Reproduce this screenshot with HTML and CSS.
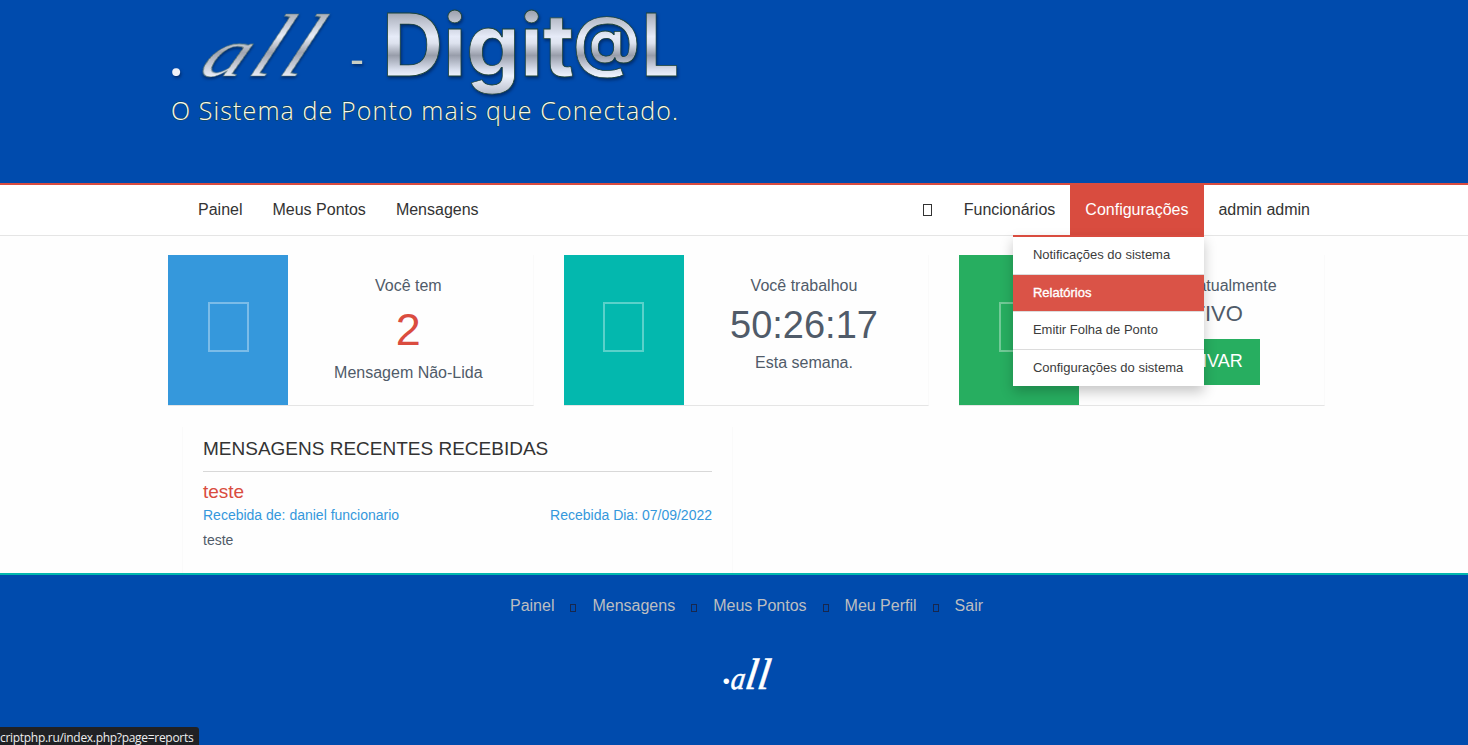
FILE: index.html
```html
<!DOCTYPE html>
<html lang="pt-BR">
<head>
<meta charset="utf-8">
<title>.all - Digit@L</title>
<link rel="stylesheet" href="styles.css">
</head>
<body>
<header class="header">
  <svg class="logo" width="520" height="135" viewBox="0 0 520 135" role="img">
    <defs>
      <linearGradient id="metal" gradientUnits="userSpaceOnUse" x1="0" y1="12" x2="0" y2="94">
        <stop offset="0" stop-color="#a0a5b1"/>
        <stop offset=".1" stop-color="#bbc0cc"/>
        <stop offset=".3" stop-color="#e6ebf8"/>
        <stop offset=".38" stop-color="#dde2ee"/>
        <stop offset=".53" stop-color="#989daa"/>
        <stop offset=".7" stop-color="#d8deec"/>
        <stop offset=".78" stop-color="#eef2fc"/>
        <stop offset="1" stop-color="#b9bfcc"/>
      </linearGradient>
      <linearGradient id="metal-script" gradientUnits="userSpaceOnUse" x1="0" y1="-62" x2="0" y2="2">
        <stop offset="0" stop-color="#aab0bb"/>
        <stop offset=".35" stop-color="#e8edf8"/>
        <stop offset=".6" stop-color="#a0a5b1"/>
        <stop offset="1" stop-color="#eef2fc"/>
      </linearGradient>
    </defs>
    <text class="logo-dot" x="2" y="76">.</text>
    <text class="logo-script" transform="translate(29 76) skewX(-26)"><tspan class="logo-a" textLength="44" lengthAdjust="spacingAndGlyphs">a</tspan><tspan dx="5">l</tspan><tspan dx="6">l</tspan></text>
    <text class="logo-dash" x="182" y="74">-</text>
    <text class="logo-name" x="214" y="76"><tspan textLength="192" lengthAdjust="spacingAndGlyphs">Digit</tspan><tspan class="logo-at" x="405" y="64" textLength="67" lengthAdjust="spacingAndGlyphs">@</tspan><tspan x="474" y="76" textLength="37" lengthAdjust="spacingAndGlyphs">L</tspan></text>
    <text class="logo-tag" x="3" y="120" textLength="507">O Sistema de Ponto mais que Conectado.</text>
  </svg>
</header>
<nav class="nav">
  <div class="nav-side">
    <a class="nav-link">Painel</a><a class="nav-link">Meus Pontos</a><a class="nav-link">Mensagens</a>
  </div>
  <div class="nav-side">
    <a class="nav-link"><i class="box box-nav"></i></a><a class="nav-link">Funcionários</a>
    <div class="nav-drop">
      <a class="nav-link nav-active">Configurações</a>
      <div class="menu">
        <a class="menu-item">Notificações do sistema</a>
        <a class="menu-item menu-hover">Relatórios</a>
        <a class="menu-item">Emitir Folha de Ponto</a>
        <a class="menu-item">Configurações do sistema</a>
      </div>
    </div>
    <a class="nav-link nav-user">admin admin</a>
  </div>
</nav>
<main class="main">
  <section class="cards">
    <div class="card">
      <div class="card-icon blue"><i class="box box-card"></i></div>
      <div class="card-body"><p>Você tem</p><p class="count">2</p><p>Mensagem Não-Lida</p></div>
    </div>
    <div class="card">
      <div class="card-icon teal"><i class="box box-card"></i></div>
      <div class="card-body"><p>Você trabalhou</p><p class="hours">50:26:17</p><p>Esta semana.</p></div>
    </div>
    <div class="card">
      <div class="card-icon green"><i class="box box-card"></i></div>
      <div class="card-body"><p>Você está atualmente</p><p class="state">INATIVO</p><a class="button">ATIVAR</a></div>
    </div>
  </section>
  <section class="panel">
    <h4 class="panel-title">MENSAGENS RECENTES RECEBIDAS</h4>
    <p class="subject">teste</p>
    <div class="meta"><span>Recebida de: daniel funcionario</span><span>Recebida Dia: 07/09/2022</span></div>
    <p class="message">teste</p>
  </section>
</main>
<footer class="footer">
  <div class="foot-links">
    <a>Painel</a><i class="box box-foot"></i><a>Mensagens</a><i class="box box-foot"></i><a>Meus Pontos</a><i class="box box-foot"></i><a>Meu Perfil</a><i class="box box-foot"></i><a>Sair</a>
  </div>
  <svg class="foot-logo" width="50" height="40" viewBox="0 0 50 40" role="img">
    <text class="foot-dot" x="0" y="26">.</text>
    <text class="foot-script" transform="translate(8 31) skewX(-8)"><tspan class="foot-a" textLength="14" lengthAdjust="spacingAndGlyphs">a</tspan><tspan>l</tspan><tspan>l</tspan></text>
  </svg>
</footer>
<div class="status">criptphp.ru/index.php?page=reports</div>
</body>
</html>
```
FILE: styles.css
```css
* { box-sizing: border-box; }
body {
  margin: 0;
  height: 745px;
  overflow: hidden;
  display: flex;
  flex-direction: column;
  background: #fefefe;
  color: #505b69;
  font: 16px/24px "Liberation Sans", Arial, sans-serif;
}
p, h4 { margin: 0; font-weight: 400; }
.header { height: 183px; padding-left: 168px; background: #004bad; flex: none; }
.logo { display: block; overflow: visible; }
.logo text { fill: url(#metal); filter: drop-shadow(1px 2px 1.5px rgba(0, 20, 60, .55)); }
.logo .logo-dot { font: 700 52px Lato, sans-serif; fill: #eef1f8; }
.logo .logo-script { font: italic 89px "Liberation Serif", serif; fill: url(#metal-script); stroke: #5d786c; stroke-width: .6px; }
.logo .logo-a { font-size: 68px; }
.logo .logo-dash { font: 400 42px "Liberation Sans", sans-serif; fill: #c9cfc4; }
.logo .logo-name { font: 700 86px Inter, sans-serif; stroke: #1d4438; stroke-width: .8px; }
.logo .logo-at { font-size: 66px; }
.logo .logo-tag {
  font: 300 25px "Open Sans", sans-serif;
  fill: #f5f8f0;
  stroke: #1d4438;
  stroke-width: 1px;
  paint-order: stroke;
  filter: none;
}

.box { display: block; border: 1px solid currentColor; }
.nav {
  height: 53px;
  flex: none;
  display: flex;
  justify-content: space-between;
  padding: 0 143px 0 183px;
  border-top: 2px solid #d94c3f;
  border-bottom: 1px solid #e5e5e5;
  background: #fff;
}
.nav-side { display: flex; height: 50px; }
.nav-link { display: flex; align-items: center; height: 50px; padding: 0 15px; color: #333; }
.nav-active { height: 52px; padding: 0 15.4px 2px 15px; background: #d94c3f; color: #fff; }
.nav-user { padding-left: 14.5px; }
.box-nav { width: 9px; height: 12px; margin-right: 2px; }
.nav-drop { position: relative; }
.menu {
  position: absolute;
  z-index: 5;
  top: 50px;
  right: 0;
  width: 191px;
  border-top: 2px solid #d94c3f;
  background: #fff;
  box-shadow: 0 6px 12px rgba(0, 0, 0, .22);
}
.menu-item {
  display: block;
  height: 37.5px;
  padding: 0 20px;
  border-bottom: 1px solid #dcdcdc;
  color: #3c3c3c;
  font-size: 13px;
  line-height: 35px;
  white-space: nowrap;
}
.menu-item:last-child { border-bottom: 0; height: 36.5px; }
.menu-hover { background: #da5347; color: #fff; -webkit-text-stroke: .35px #fff; }

.main { height: 337px; flex: none; padding: 19px 143px 0 168px; }
.cards { display: grid; grid-template-columns: repeat(3, 1fr); gap: 30px; }
.card { display: flex; height: 151px; border-bottom: 1px solid #e5e5e5; border-right: 1px solid #fafafa; }
.card-icon { width: 120px; height: 150px; flex: none; padding: 47px 0 0 39.5px; color: rgba(255, 255, 255, .35); }
.blue { background: #3598dc; }
.teal { background: #03b8ae; }
.green { background: #27ae60; }
.box-card { width: 41px; height: 50px; border-width: 2px; }
.card-body { flex: 1; padding: 19px 4px 0 0; text-align: center; white-space: nowrap; }
.count { color: #da4c3f; font-size: 45px; line-height: 63px; }
.hours { padding-top: 1px; font-size: 38px; line-height: 52px; }
.state { font-size: 22px; line-height: 32px; }
.button { display: inline-block; width: 120px; height: 46px; margin-top: 9px; padding: 0 17px; background: #27ae60; color: #fff; font-size: 18px; line-height: 44px; text-align: right; }
.panel {
  width: 551px;
  height: 146px;
  margin: 21px 0 0 14px;
  padding: 10px 20px 0;
  border: solid #fafafa;
  border-width: 0 1px;
}
.panel-title { height: 35px; border-bottom: 1px solid #d8d8d8; color: #333; font-size: 19px; line-height: 24px; }
.subject { margin-top: 8px; color: #d94c3f; font-size: 19px; line-height: 23px; }
.meta { display: flex; justify-content: space-between; color: #3598dc; font-size: 14px; line-height: 24px; }
.message { font-size: 14px; line-height: 27px; }

.footer {
  flex: 1;
  display: flex;
  flex-direction: column;
  align-items: center;
  padding: 19px 0 0 25px;
  border-top: 2px solid #03b8ae;
  background: #004bad;
}
.foot-links { display: flex; align-items: center; gap: 16px; color: #bcbec1; }
.box-foot { width: 6px; height: 8px; margin-top: 3px; color: #17284f; }
.foot-logo { margin-top: 40px; overflow: visible; }
.foot-logo text { fill: #fff; }
.foot-dot { font: 700 36px Lato, sans-serif; }
.foot-script { font: italic 400 44px "Liberation Serif", serif; stroke: #fff; stroke-width: .6px; }
.foot-a { font-size: 32px; }
.status {
  position: absolute;
  left: 0;
  bottom: 0;
  width: 199px;
  height: 18px;
  border-radius: 0 3px 0 0;
  background: #202124;
  color: #eee;
  font: 12px/21px "Open Sans", sans-serif;
  letter-spacing: -.3px;
  white-space: nowrap;
}
```
